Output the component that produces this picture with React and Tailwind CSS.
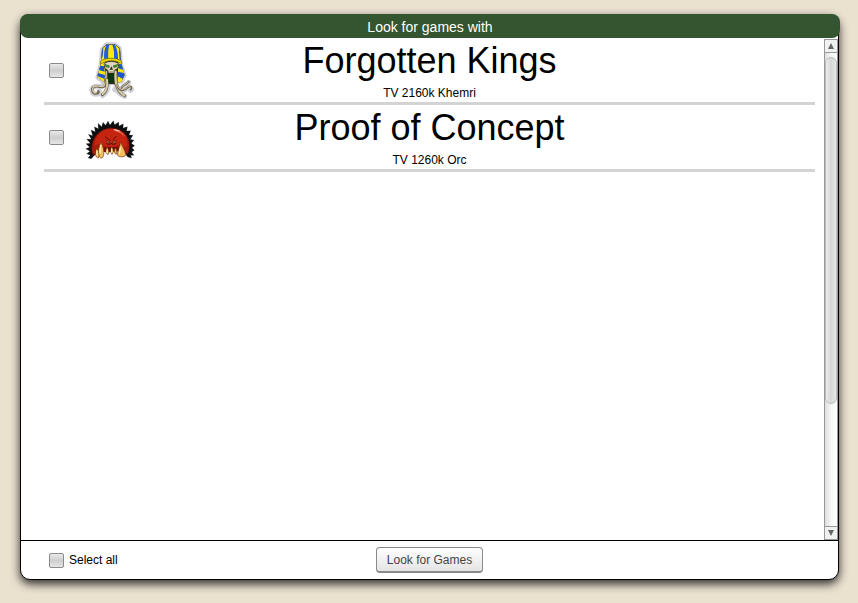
import { useState } from 'react';

const teams = [
  { id: 'kings', name: 'Forgotten Kings', value: '2160k', race: 'Khemri', Icon: KhemriIcon },
  { id: 'poc', name: 'Proof of Concept', value: '1260k', race: 'Orc', Icon: OrcIcon },
];

function KhemriIcon() {
  return (
    <svg className="w-16 h-16" viewBox="0 6 192 192" aria-hidden="true">
      {/* pale outline */}
      <g fill="none" stroke="#cfcfd8" strokeLinejoin="round" strokeLinecap="round">
        <path d="M78 20 L106 20 L121 33 L125 80 L136 116 L126 136 L72 140 L50 122 L60 82 L64 36 Z" fill="#cfcfd8" strokeWidth="8" />
        <path d="M74 142 C64 154 52 144 41 150 C31 157 36 172 48 172 C56 172 60 168 58 162 M84 140 C86 158 78 168 68 176 M108 140 C106 160 120 172 134 178 M104 158 C124 166 134 160 142 152 M124 154 C134 142 142 144 146 136 M142 150 C152 148 158 156 152 160" strokeWidth="15" />
      </g>

      {/* headdress */}
      <path d="M79 22 L105 22 L120 34 L124 80 L134 114 L124 134 L110 138 L76 138 L52 120 L62 80 L66 36 Z" fill="#22241f" />
      <path d="M79 23 L105 23 L119 35 L123 72 C108 62 78 62 63 74 L67 37 Z" fill="#ffe80f" />
      <path d="M79 23 L88 23 C84 38 84 52 85 66 L73 69 C71 52 72 38 79 23 Z" fill="#1d60dc" />
      <path d="M97 23 L105 23 C113 38 114 52 114 68 L102 65 C103 50 102 38 97 23 Z" fill="#1d60dc" />
      <path d="M67 37 L70 33 L68 58 L63 68 Z M119 35 L123 70 L119 68 L117 40 Z" fill="#1a4fb8" />
      <path d="M62 72 C78 61 108 61 124 72 L125 80 C106 68 80 68 62 82 Z" fill="#f0d800" stroke="#7a6c00" strokeWidth="2" />
      <path d="M62 82 L74 76 L76 108 L73 136 L52 120 Z" fill="#ffe512" />
      <path d="M61 86 L72 88 L74 104 L57 99 Z M54 108 L75 114 L74 126 L52 117 Z" fill="#1c56cc" />
      <path d="M115 76 L125 80 L134 114 L124 134 L112 137 Z" fill="#ffe512" />
      <path d="M116 80 L125 82 L130 99 L115 94 Z M114 104 L132 108 L134 115 L128 126 L113 118 Z" fill="#1c56cc" />

      {/* skull and jaw */}
      <path d="M71 80 C82 70 106 70 117 80 L115 94 L107 101 L108 142 L79 142 L79 100 L73 94 Z" fill="#3c3927" />
      <path d="M73 80 C84 72 104 72 115 80 L112 94 L104 98 L101 107 L86 107 L83 98 L76 94 Z" fill="#ddd5b8" />
      <path d="M74 81 L89 86 L87 92 L77 90 Z M114 81 L99 86 L101 92 L111 90 Z" fill="#24401c" />
      <path d="M77 85 L86 88 L80 89 Z M111 85 L102 88 L108 89 Z" fill="#3fc23a" stroke="#3fae38" strokeWidth="2" />
      <path d="M94 88 L89 98 L99 98 Z" fill="#2c271e" />
      <path d="M84 108 L102 108 L102 139 L84 139 Z" fill="#12340f" />
      <path d="M86 106 L86 101 M91 106 L91 102 M96 106 L96 102 M101 106 L101 101" stroke="#5d573f" strokeWidth="1.5" />

      {/* wrappings */}
      <g fill="none" strokeLinecap="round">
        <path d="M79 104 C78 122 80 146 69 150 C57 153 51 144 41 150 C33 156 37 170 48 170 C54 170 57 167 55 163" stroke="#6c654c" strokeWidth="7" />
        <path d="M79 104 C78 122 79 144 69 148 C57 151 51 143 41 149 C34 155 38 168 48 168" stroke="#d3caa7" strokeWidth="4" />
        <path d="M80 128 C84 150 80 164 67 173 M107 104 C104 144 113 167 134 176" stroke="#6c654c" strokeWidth="9" />
        <path d="M81 128 C84 150 79 162 68 171 M107 104 C104 144 114 165 133 175" stroke="#d8cfac" strokeWidth="6" />
        <path d="M112 144 C116 164 134 162 142 152 C150 145 157 151 152 157 M125 152 C131 142 138 144 146 134" stroke="#6c654c" strokeWidth="6" />
        <path d="M112 144 C116 162 134 160 142 151 C149 145 154 150 151 155 M126 151 C131 142 138 143 145 135" stroke="#cfc59f" strokeWidth="3" />
      </g>
    </svg>
  );
}

function OrcIcon() {
  return (
    <svg className="w-16 h-16" viewBox="0 -15 192 192" aria-hidden="true">
      {/* fur */}
      <path
        d="M44 132 L34 143 L24 141 L31 133 L20 128 L30 121 L17 113 L29 109 L18 98 L31 97 L20 84 L34 85 L25 70 L38 74 L33 57 L46 62 L43 47 L55 53 L54 37 L65 47 L69 34 L77 43 L84 30 L90 42 L100 29 L104 41 L116 33 L117 45 L130 38 L129 51 L142 47 L140 60 L152 59 L147 72 L159 73 L151 85 L162 88 L154 97 L164 104 L156 110 L163 118 L155 123 L162 133 L152 133 L155 141 L143 138 L132 122 L100 100 Z"
        fill="#0c0e10"
        stroke="#d5d9df"
        strokeWidth="3"
        paintOrder="stroke"
      />
      {/* head */}
      <path d="M40 133 C29 114 36 84 53 68 C73 46 108 46 129 62 C150 78 153 108 143 130 L130 122 L122 112 L110 120 L66 122 L54 126 Z" fill="#a81a0c" stroke="#420a06" strokeWidth="2" />
      <path d="M44 106 C42 70 72 52 96 53 C122 54 143 76 142 104 C136 112 126 106 120 98 C108 110 80 110 66 100 C58 96 50 100 44 106 Z" fill="#c42410" />
      <path d="M100 55 C118 56 130 66 137 78 C126 68 112 62 100 58 Z" fill="#e56a52" />
      <path d="M103 55 C111 55 117 58 121 61 C113 61 108 59 103 57 Z" fill="#ffd2c6" />

      {/* face */}
      <path d="M76 78 L90 88 M108 76 L99 87" fill="none" stroke="#6a0d06" strokeWidth="3" strokeLinecap="round" />
      <path d="M80 98 C84 102 90 100 93 97 C97 101 104 102 108 97" fill="none" stroke="#5a0a05" strokeWidth="3" strokeLinecap="round" />
      <path d="M79 89 L90 93 L87 97 L81 95 Z M108 89 L98 93 L101 97 L107 95 Z" fill="#f7b368" stroke="#4d1006" strokeWidth="2" />
      <path d="M84 93 L87 94 M101 94 L104 93" stroke="#332011" strokeWidth="2" />

      {/* mouth and tusks */}
      <path d="M66 118 L76 108 L112 108 L118 116 L110 124 L102 120 L88 124 L76 124 Z" fill="#6d0b06" />
      <g fill="#f3bf5c" stroke="#74330d" strokeWidth="2" strokeLinejoin="round">
        <path d="M62 93 C70 106 76 130 67 140 C60 146 54 132 55 118 Z" />
        <path d="M50 112 C57 122 59 136 55 141 C46 140 45 126 50 112 Z" />
        <path d="M121 93 C128 108 140 126 136 134 C129 140 113 138 112 131 C114 118 120 110 121 93 Z" />
        <path d="M81 108 C87 117 88 127 84 131 C78 129 76 119 81 108 Z" />
        <path d="M95 107 C101 116 101 126 96 130 C91 126 91 116 95 107 Z" />
        <path d="M106 110 C112 118 111 126 108 130 C103 126 102 118 106 110 Z" />
      </g>
      <path d="M62 104 L60 126 M51 120 L51 132 M121 110 L118 128 M81 117 L81 125 M95 114 L95 124" stroke="#fff0b5" strokeWidth="4" strokeLinecap="round" />
    </svg>
  );
}

function Checkbox(props) {
  return (
    <input
      type="checkbox"
      className="appearance-none shrink-0 w-[15px] h-[15px] rounded-xs border border-[#8b8b8b] bg-linear-to-b from-[#e9e9e9] via-[#cecece] to-[#e6e6e6] checked:from-[#6f8f6b] checked:via-[#33552f] checked:to-[#6f8f6b]"
      {...props}
    />
  );
}

function TeamRow({ team, checked, onToggle }) {
  const { Icon } = team;
  return (
    <li className="border-b-3 border-[#d3d3d3]">
      <label className="grid grid-cols-[100px_1fr_100px] items-center h-16">
        <span className="flex items-center gap-4 pl-[5px]">
          <Checkbox checked={checked} onChange={onToggle} />
          <Icon />
        </span>
        <span className="text-center">
          <span className="block text-[36px] leading-[45px]">{team.name}</span>
          <span className="block text-xs leading-5">TV {team.value} {team.race}</span>
        </span>
      </label>
    </li>
  );
}

function ScrollButton({ label, up }) {
  return (
    <button type="button" aria-label={label} className="flex items-center justify-center h-[14px] shrink-0 border border-[#999] bg-[#f1f1f1]">
      <svg className="w-2 h-2" viewBox="0 0 8 8">
        <path d={up ? 'M4 1 L7 7 H1 Z' : 'M4 7 L7 1 H1 Z'} fill="#666" />
      </svg>
    </button>
  );
}

function ScrollBar() {
  return (
    <div className="flex flex-col w-[14px] shrink-0 pt-px">
      <ScrollButton label="Scroll up" up />
      <div className="flex-1 pt-1 border-x border-[#999] bg-linear-to-r from-[#dedede] via-[#f7f7f7] to-white">
        <div className="h-[74%] rounded-full border border-[#bbb] bg-linear-to-r from-[#ececec] via-[#d6d6d6] to-[#e8e8e8]" />
      </div>
      <ScrollButton label="Scroll down" />
    </div>
  );
}

export default function App() {
  const [selected, setSelected] = useState([]);
  const allSelected = selected.length === teams.length;

  const toggle = (id) => {
    setSelected(selected.includes(id) ? selected.filter((s) => s !== id) : [...selected, id]);
  };

  return (
    <div className="min-h-screen flex bg-[#eae1cf] pt-[14px] pb-[23px] pl-5 pr-[19px] font-['Liberation_Sans',Arial,sans-serif] text-black">
      <main className="flex-1 flex flex-col rounded-[10px] border border-black bg-white shadow-[0_4px_10px_rgba(0,0,0,0.8)]">
        <h1 className="-mt-px -ml-px -mr-0.5 h-6 rounded-lg bg-[#335530] text-white text-sm leading-[26px] text-center">
          Look for games with
        </h1>

        <div className="flex-1 flex">
          <ul className="flex-1 pl-[23px] pr-[9px]">
            {teams.map((team) => (
              <TeamRow
                key={team.id}
                team={team}
                checked={selected.includes(team.id)}
                onToggle={() => toggle(team.id)}
              />
            ))}
          </ul>
          <ScrollBar />
        </div>

        <footer className="grid grid-cols-3 items-center h-[39px] border-t border-black pl-7 pr-7 text-xs">
          <label className="flex items-center gap-[5px]">
            <Checkbox
              checked={allSelected}
              onChange={() => setSelected(allSelected ? [] : teams.map((t) => t.id))}
            />
            Select all
          </label>
          <button
            type="button"
            className="justify-self-center h-[26px] px-[10px] rounded-sm border border-b-2 border-[#8a8a8a] bg-linear-to-b from-white to-[#e4e4e4] text-[#444]"
          >
            Look for Games
          </button>
        </footer>
      </main>
    </div>
  );
}
